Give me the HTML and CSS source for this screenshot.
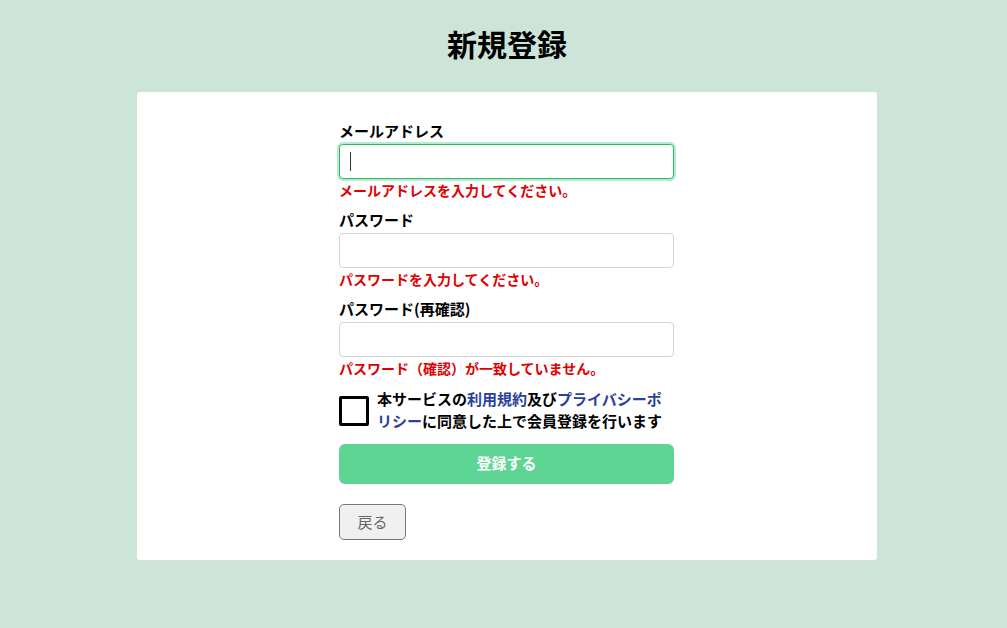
FILE: index.html
```html
<!DOCTYPE html>
<html lang="ja">
<head>
<meta charset="utf-8">
<title>新規登録</title>
<link rel="stylesheet" href="styles.css">
</head>
<body>
<div class="page">
  <h1 class="title">新規登録</h1>
  <div class="card">
    <form class="form">
      <div class="field">
        <label class="label">メールアドレス</label>
        <span class="input-wrap">
          <input class="input input-focus" type="email">
          <span class="caret"></span>
        </span>
        <p class="error">メールアドレスを入力してください。</p>
      </div>
      <div class="field">
        <label class="label">パスワード</label>
        <input class="input" type="password">
        <p class="error">パスワードを入力してください。</p>
      </div>
      <div class="field">
        <label class="label">パスワード(再確認)</label>
        <input class="input" type="password">
        <p class="error">パスワード（確認）が一致していません。</p>
      </div>
      <div class="agree">
        <span class="checkbox"></span>
        <p class="agree-text">本サービスの<a class="link">利用規約</a>及び<a class="link">プライバシーポリシー</a>に同意した上で会員登録を行います</p>
      </div>
      <button class="submit" type="button">登録する</button>
      <button class="back" type="button">戻る</button>
    </form>
  </div>
</div>
</body>
</html>
```
FILE: styles.css
```css
html, body {
  margin: 0;
  padding: 0;
  background: #cde5d8;
}
body {
  font-family: "Noto Sans CJK JP", "Noto Sans", sans-serif;
  color: #111;
}
.page {
  padding-left: 7px;
  padding-bottom: 40px;
}
.title {
  margin: 0;
  padding-top: 23px;
  height: 40px;
  line-height: 40px;
  font-size: 30px;
  font-weight: 700;
  text-align: center;
  margin-bottom: 29px;
  color: #000;
}
.card {
  width: 740px;
  margin: 0 auto;
  background: #fff;
  border-radius: 3px;
  padding: 28px 0 20px;
  box-sizing: border-box;
}
.form {
  width: 335px;
  margin: 0 0 0 202px;
  display: flex;
  flex-direction: column;
  align-items: flex-start;
}
.field {
  display: flex;
  flex-direction: column;
  width: 100%;
  margin-bottom: 9px;
}
.label {
  font-size: 15px;
  line-height: 22px;
  font-weight: 700;
  margin-bottom: 2px;
  color: #000;
}
.input-wrap {
  position: relative;
  display: block;
}
.input {
  display: block;
  width: 100%;
  height: 35px;
  box-sizing: border-box;
  border: 1px solid #d4d4d4;
  border-radius: 4px;
  background: #fff;
  outline: none;
  padding: 0 10px;
  margin: 0;
}
.input-focus {
  border: 1px solid #34b866;
  box-shadow: 0 0 0 2px #b8ecd0;
}
.caret {
  position: absolute;
  left: 11px;
  top: 8px;
  width: 1px;
  height: 19px;
  background: #333;
}
.error {
  margin: 1px 0 0;
  font-size: 14px;
  line-height: 20px;
  font-weight: 700;
  color: #e00000;
}
.agree {
  display: flex;
  align-items: flex-start;
  gap: 8px;
  margin-top: 1px;
}
.checkbox {
  flex: 0 0 auto;
  width: 30px;
  height: 30px;
  box-sizing: border-box;
  border: 3px solid #000;
  border-radius: 2px;
  margin-top: 8px;
}
.agree-text {
  margin: 0;
  font-size: 15px;
  line-height: 22px;
  font-weight: 700;
  color: #000;
}
.link {
  color: #2b3f9e;
}
.submit {
  margin-top: 12px;
  width: 100%;
  height: 40px;
  border: none;
  border-radius: 6px;
  background: #5fd595;
  color: #fff;
  font-family: inherit;
  font-size: 15px;
  font-weight: 700;
  padding: 0 0 4px;
}
.back {
  margin-top: 20px;
  width: 67px;
  height: 36px;
  border: 1px solid #777;
  border-radius: 5px;
  background: #f0f0f0;
  color: #666;
  font-family: inherit;
  font-size: 15px;
  font-weight: 400;
  padding: 0 0 2px;
}
```
